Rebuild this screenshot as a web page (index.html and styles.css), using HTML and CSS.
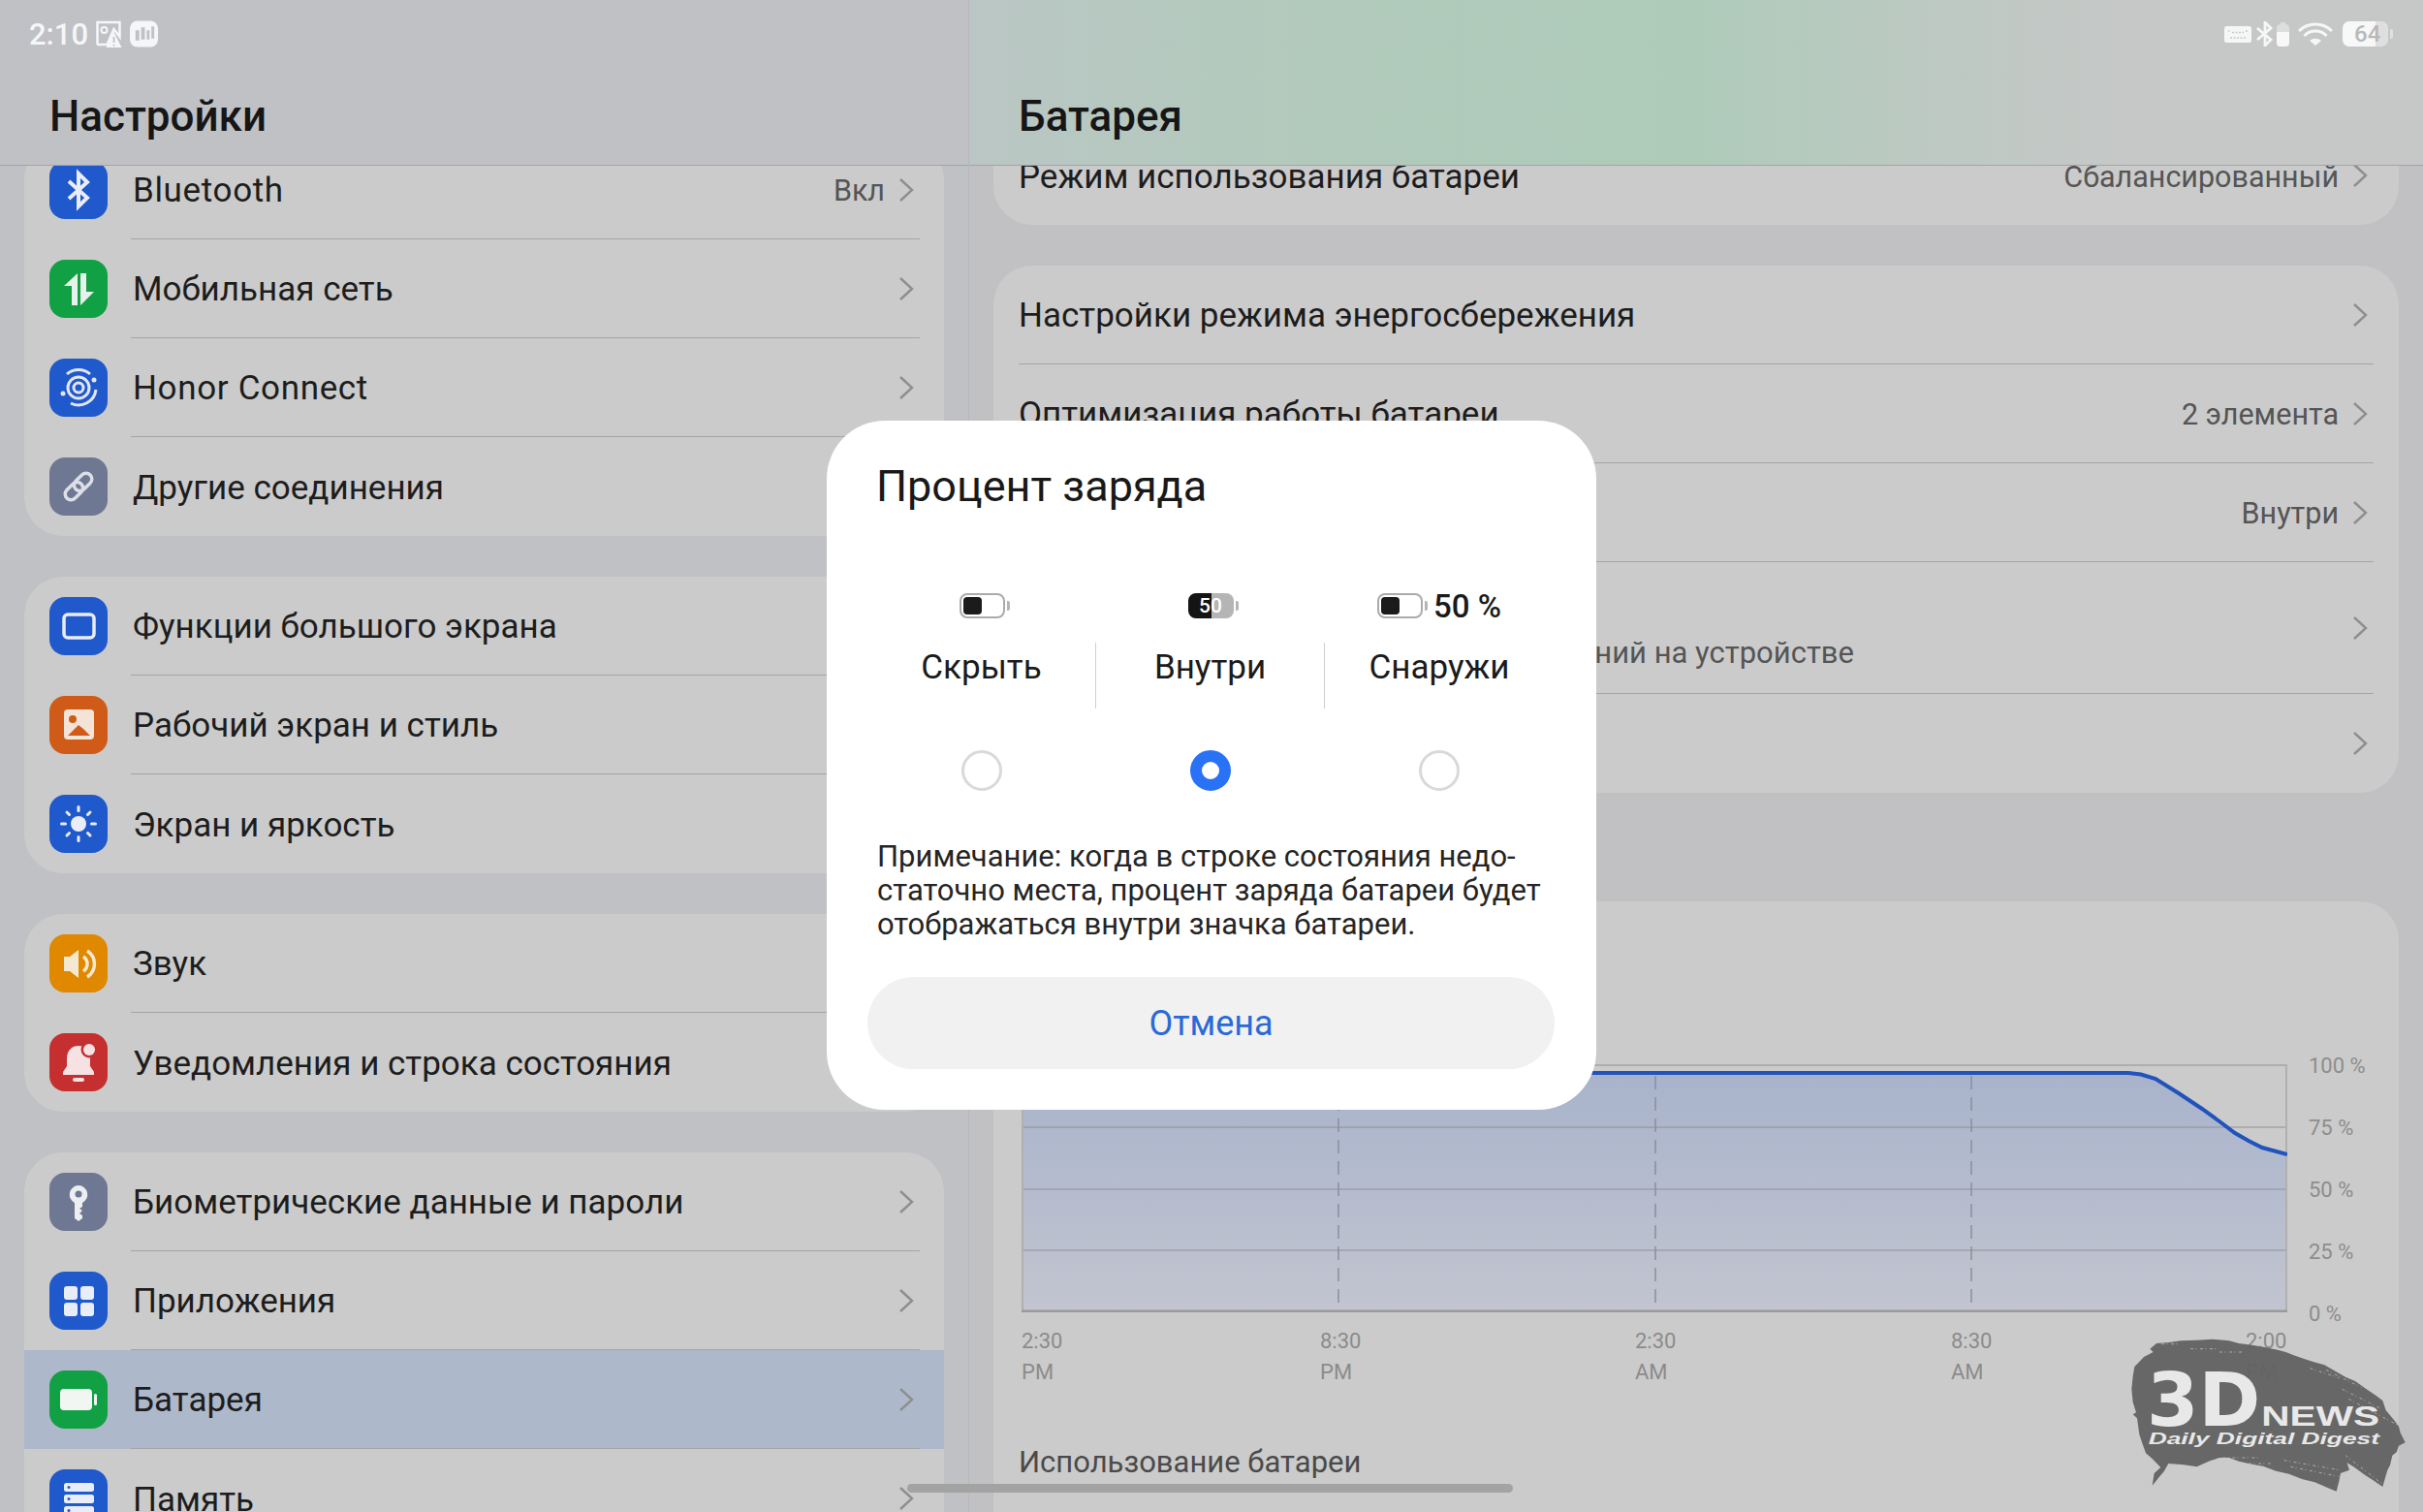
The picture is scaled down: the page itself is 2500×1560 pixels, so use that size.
FILE: index.html
```html
<!DOCTYPE html>
<html lang="ru">
<head>
    <meta charset="UTF-8">
    <title>Настройки</title>
    <link rel="stylesheet" href="styles.css">
</head>
<body>
<svg class="defs" width="0" height="0">
    <symbol id="chev" viewBox="0 0 16 26"><path d="M2 2l12 11L2 24" fill="none" stroke="#8e8e8e" stroke-width="2.4"/></symbol>
</svg>

<div class="screen">
    <!-- левая колонка -->
    <div class="pane pane-left">
        <div class="head"><h1>Настройки</h1></div>
        <div class="list list-left">
            <div class="card">
                <div class="row">
                    <svg class="ico blue" viewBox="0 0 60 60"><path d="M20 21l19 17-9 9V13l9 9-19 17" fill="none" stroke="#e8edf8" stroke-width="4"/></svg>
                    <div class="row-body"><span class="name latin">Bluetooth</span><span class="val">Вкл</span><svg class="chev"><use href="#chev"/></svg></div>
                </div>
                <div class="row">
                    <svg class="ico green" viewBox="0 0 60 60"><path d="M29 14v33h-6V27h-8zM32 47V14h6v19h8z" fill="#e8f2ec"/></svg>
                    <div class="row-body"><span class="name">Мобильная сеть</span><svg class="chev"><use href="#chev"/></svg></div>
                </div>
                <div class="row">
                    <svg class="ico blue" viewBox="0 0 60 60"><g fill="none" stroke="#e0e7f6" stroke-width="3"><circle cx="30" cy="30" r="5"/><circle cx="30" cy="30" r="11"/><path d="M18 16a18 18 0 0 1 24 0M48 32a18 18 0 0 1-26 14"/></g><circle cx="46" cy="22" r="2.5" fill="#e0e7f6"/><circle cx="14" cy="36" r="2.5" fill="#e0e7f6"/></svg>
                    <div class="row-body"><span class="name latin">Honor Connect</span><svg class="chev"><use href="#chev"/></svg></div>
                </div>
                <div class="row">
                    <svg class="ico slate" viewBox="0 0 60 60"><g fill="none" stroke="#dcdfe6" stroke-width="3.5" transform="rotate(-45 30 30)"><rect x="13" y="24" width="21" height="12" rx="6"/><rect x="26" y="24" width="21" height="12" rx="6"/></g></svg>
                    <div class="row-body"><span class="name">Другие соединения</span><svg class="chev"><use href="#chev"/></svg></div>
                </div>
            </div>

            <div class="card">
                <div class="row">
                    <svg class="ico blue" viewBox="0 0 60 60"><rect x="15" y="18" width="31" height="24" rx="4" fill="none" stroke="#e8edf8" stroke-width="3.5"/></svg>
                    <div class="row-body"><span class="name">Функции большого экрана</span><svg class="chev"><use href="#chev"/></svg></div>
                </div>
                <div class="row">
                    <svg class="ico orange" viewBox="0 0 60 60"><rect x="15" y="14" width="31" height="31" rx="4" fill="#f4e4d8"/><circle cx="24" cy="24" r="4" fill="#d05b18"/><path d="M19 41l11-11 5 4 7 7z" fill="#d05b18"/></svg>
                    <div class="row-body"><span class="name">Рабочий экран и стиль</span><svg class="chev"><use href="#chev"/></svg></div>
                </div>
                <div class="row">
                    <svg class="ico blue" viewBox="0 0 60 60"><circle cx="30" cy="30" r="8" fill="#e8edf8"/><path d="M30 12.500v4M30 43.500v4M12.500 30h4M43.500 30h4M18 18l2.500 2.500M39.500 39.500l2.500 2.500M42 18l-2.500 2.500M20.500 39.500L18 42" stroke="#e8edf8" stroke-width="3" stroke-linecap="round"/></svg>
                    <div class="row-body"><span class="name">Экран и яркость</span><svg class="chev"><use href="#chev"/></svg></div>
                </div>
            </div>

            <div class="card">
                <div class="row">
                    <svg class="ico amber" viewBox="0 0 60 60"><path d="M15 23h6l9-7v29l-9-7h-6z" fill="#f5e8d0"/><path d="M35 23a9 9 0 0 1 0 15M39 17a16 16 0 0 1 0 27" fill="none" stroke="#f5e8d0" stroke-width="3.5"/></svg>
                    <div class="row-body"><span class="name">Звук</span><svg class="chev"><use href="#chev"/></svg></div>
                </div>
                <div class="row">
                    <svg class="ico red" viewBox="0 0 60 60"><path d="M30 13c-8 0-12 6-12 13v8l-4 6v3h32v-3l-4-6v-8c0-7-4-13-12-13z" fill="#f6e2e2"/><rect x="24" y="46" width="12" height="4" rx="2" fill="#f6e2e2"/><circle cx="41" cy="17" r="8.5" fill="#c52f2f"/><circle cx="41" cy="17" r="6" fill="#f6e2e2"/></svg>
                    <div class="row-body"><span class="name">Уведомления и строка состояния</span><svg class="chev"><use href="#chev"/></svg></div>
                </div>
            </div>

            <div class="card">
                <div class="row">
                    <svg class="ico slate" viewBox="0 0 60 60"><path d="M30 13a9.500 9.500 0 0 0-4 18v16l4 3 4-3v-3l-3-2 3-3-3-2 3-2v-4a9.500 9.500 0 0 0-4-18z" fill="#eceef2"/><circle cx="30" cy="22" r="3.500" fill="#6f7893"/></svg>
                    <div class="row-body"><span class="name">Биометрические данные и пароли</span><svg class="chev"><use href="#chev"/></svg></div>
                </div>
                <div class="row">
                    <svg class="ico blue" viewBox="0 0 60 60"><g fill="#e8edf8"><rect x="15" y="15" width="14" height="14" rx="3"/><rect x="32" y="15" width="14" height="14" rx="3"/><rect x="15" y="32" width="14" height="14" rx="3"/><rect x="32" y="32" width="14" height="14" rx="3"/></g></svg>
                    <div class="row-body"><span class="name">Приложения</span><svg class="chev"><use href="#chev"/></svg></div>
                </div>
                <div class="row row-active">
                    <svg class="ico green" viewBox="0 0 60 60"><rect x="11" y="19" width="33" height="22" rx="4" fill="#f2f6f3"/><rect x="46" y="24" width="3" height="12" rx="1.500" fill="#f2f6f3"/></svg>
                    <div class="row-body"><span class="name">Батарея</span><svg class="chev"><use href="#chev"/></svg></div>
                </div>
                <div class="row">
                    <svg class="ico blue" viewBox="0 0 60 60"><g fill="#e8edf8"><rect x="15" y="14" width="31" height="9" rx="2.500"/><rect x="15" y="26" width="31" height="9" rx="2.500"/><rect x="15" y="38" width="31" height="9" rx="2.500"/></g><g fill="#2059cb"><circle cx="20" cy="18.500" r="1.500"/><circle cx="20" cy="30.500" r="1.500"/><circle cx="20" cy="42.500" r="1.500"/></g></svg>
                    <div class="row-body"><span class="name">Память</span><svg class="chev"><use href="#chev"/></svg></div>
                </div>
            </div>
        </div>
    </div>

    <!-- правая колонка -->
    <div class="pane pane-right">
        <div class="head head-right"><h1>Батарея</h1></div>
        <div class="list list-right">
            <div class="card">
                <div class="row">
                    <div class="row-body flat"><span class="name">Режим использования батареи</span><span class="val">Сбалансированный</span><svg class="chev"><use href="#chev"/></svg></div>
                </div>
            </div>
            <div class="card">
                <div class="row">
                    <div class="row-body flat"><span class="name">Настройки режима энергосбережения</span><svg class="chev"><use href="#chev"/></svg></div>
                </div>
                <div class="row">
                    <div class="row-body flat"><span class="name">Оптимизация работы батареи</span><span class="val">2 элемента</span><svg class="chev"><use href="#chev"/></svg></div>
                </div>
                <div class="row">
                    <div class="row-body flat"><span class="name"></span><span class="val">Внутри</span><svg class="chev"><use href="#chev"/></svg></div>
                </div>
                <div class="row row-tall">
                    <div class="row-body flat">
                        <div class="two-line">
                            <span class="sub">приложений на устройстве</span>
                        </div>
                        <svg class="chev"><use href="#chev"/></svg>
                    </div>
                </div>
                <div class="row">
                    <div class="row-body flat"><span class="name"></span><svg class="chev"><use href="#chev"/></svg></div>
                </div>
            </div>

            <div class="card card-chart">
                <div class="chart-wrap">
                    <svg class="plot" viewBox="0 0 1306 256">
                        <defs>
                            <linearGradient id="fillGrad" x1="0" y1="0" x2="0" y2="1">
                                <stop offset="0" stop-color="#a8b3cb"/>
                                <stop offset="1" stop-color="#c2c5d0"/>
                            </linearGradient>
                        </defs>
                        <path d="M0 256V9H1142L1155 10.500L1170 15L1194 30L1218 46L1236 59L1252 71L1266 79L1280 86L1306 93V256z" fill="url(#fillGrad)"/>
                        <path d="M1 1H1305M1 65H1305M1 129H1305M1 192H1305" stroke="#8c8c8c" stroke-opacity=".45" stroke-width="2" fill="none"/>
                        <path d="M1 0V256M1305 0V256" stroke="#b0b0b0" stroke-width="2" fill="none"/>
                        <path d="M327 12V256M654 12V256M980 12V256" stroke="#8a8f9a" stroke-width="1.500" stroke-dasharray="14 8" fill="none"/>
                        <path d="M0 255H1306" stroke="#9a9a9a" stroke-width="3"/>
                        <path d="M0 9H1142L1155 10.500L1170 15L1194 30L1218 46L1236 59L1252 71L1266 79L1280 86L1306 93" stroke="#2053bb" stroke-width="4" fill="none"/>
                    </svg>
                    <div class="y-labels">
                        <span>100 %</span><span>75 %</span><span>50 %</span><span>25 %</span><span>0 %</span>
                    </div>
                </div>
                <div class="x-labels">
                    <span>2:30<br>PM</span><span>8:30<br>PM</span><span>2:30<br>AM</span><span>8:30<br>AM</span><span>2:00<br>PM</span>
                </div>
                <div class="section-name">Использование батареи</div>
            </div>
        </div>
    </div>

    <!-- строка состояния -->
    <div class="status">
        <div class="status-side">
            <span class="clock">2:10</span>
            <svg class="st-pic" viewBox="0 0 28 28"><path d="M3 2h23v15l-6-8-7 16H4a1 1 0 0 1-1-1z" fill="none" stroke="#f5f6f7" stroke-width="2.500"/><circle cx="10" cy="10" r="3" fill="none" stroke="#f5f6f7" stroke-width="2"/><path d="M20 12l8 16H12z" fill="#f5f6f7"/><path d="M20 17v6M20 25v1.500" stroke="#bfc1c5" stroke-width="1.800"/></svg>
            <svg class="st-pic" viewBox="0 0 30 28"><rect width="30" height="28" rx="8" fill="#f5f6f7"/><path d="M6 10h4v11H6zM12 7h4v13h-4zM18 10h3v10h-3zM23 6h3v13h-3z" fill="#bfc1c5"/></svg>
        </div>
        <div class="status-side status-right">
            <svg class="st-kbd" viewBox="0 0 28 17"><rect width="28" height="17" rx="2.500" fill="#f6f6f6"/><path d="M4 5h1.500M8 6.500h12M22 5h2M6 12h16" stroke="#c6c7c7" stroke-width="1.500" stroke-dasharray="2 1.500"/></svg>
            <svg class="st-bt" viewBox="0 0 18 26"><path d="M2 7l14 12-6 6V1l6 6L2 19" fill="none" stroke="#f6f6f6" stroke-width="2.800"/></svg>
            <svg class="st-cell" viewBox="0 0 13 26"><path d="M4 3h5V1H4z" fill="#dcdddd"/><rect y="3" width="13" height="23" rx="4" fill="#dcdddd"/><path d="M0 11h13v11a4 4 0 0 1-4 4H4a4 4 0 0 1-4-4z" fill="#f8f8f8"/></svg>
            <svg class="st-wifi" viewBox="0 0 36 24"><g fill="none" stroke="#f6f6f6" stroke-width="3"><path d="M1 9a24 24 0 0 1 34 0"/><path d="M6.500 14a16 16 0 0 1 23 0"/></g><path d="M12 19a9 9 0 0 1 12 0l-6 5z" fill="#f6f6f6"/></svg>
            <div class="st-batt"><span class="st-batt-num">64</span></div>
        </div>
    </div>

    <!-- диалог -->
    <div class="dialog">
        <h2>Процент заряда</h2>
        <div class="options">
            <div class="option">
                <div class="batt-slot"><span class="batt"><i class="batt-fill"></i></span></div>
                <div class="opt-name">Скрыть</div>
                <span class="radio"></span>
            </div>
            <div class="option">
                <div class="batt-slot"><span class="batt batt-in">50</span></div>
                <div class="opt-name">Внутри</div>
                <span class="radio on"></span>
            </div>
            <div class="option">
                <div class="batt-slot"><span class="batt"><i class="batt-fill"></i></span><span class="batt-text">50 %</span></div>
                <div class="opt-name">Снаружи</div>
                <span class="radio"></span>
            </div>
        </div>
        <p class="note">Примечание: когда в строке состояния недо-<br>статочно места, процент заряда батареи будет<br>отображаться внутри значка батареи.</p>
        <div class="cancel">Отмена</div>
    </div>

    <!-- водяной знак -->
    <svg class="mark" viewBox="0 0 1050 630">
        <path d="M215 135L205 125L225 108L265 105L300 100L350 98L400 95L450 100L480 108L520 113L560 120L600 128L625 135L650 145L680 155L710 165L745 175L780 195L810 212L840 225L875 250L905 270L925 285L935 315L960 345L975 365L980 385L995 415L975 425L968 445L955 455L948 485L940 500L925 552L900 535L870 515L835 490L815 478L822 500L795 510L790 535L782 566L755 555L715 538L675 528L635 512L595 503L555 488L520 482L480 473L450 462L420 462L390 472L350 490L310 484L262 480L248 505L235 520L212 548L218 510L238 492L212 465L192 448L182 420L172 390L165 340L152 328L162 322L152 290L148 250L152 210L157 180L172 165L186 150z" fill="#636363" fill-opacity=".96"/>
        <path class="mark-brush" d="M240 110h60M330 125h90M420 135h70M700 185l90 30M750 190l110 55M800 250l120 60M820 280l150 80M430 462h110M450 480h130M620 470l170 30M640 490l150 30M810 455l110 85"/>
        <text class="mark-3d" x="195" y="362" textLength="352" lengthAdjust="spacingAndGlyphs">3D</text>
        <text class="mark-news" x="550" y="362" textLength="365" lengthAdjust="spacingAndGlyphs">NEWS</text>
        <text class="mark-sub" x="200" y="420" textLength="715" lengthAdjust="spacingAndGlyphs">Daily Digital Digest</text>
    </svg>

    <div class="home-bar"></div>
</div>
</body>
</html>
```

FILE: styles.css
```css
*{
    padding: 0;
    margin: 0;
    box-sizing: border-box;
}
html, body{
    width: 2500px;
    height: 1560px;
    overflow: hidden;
    font-family: Roboto, "Noto Sans", sans-serif;
    color: #1d1d1d;
}
.defs{
    position: absolute;
}
.screen{
    position: relative;
    width: 2500px;
    height: 1560px;
    display: flex;
    overflow: hidden;
    background-color: #c1c1c4;
}
.pane{
    position: relative;
    height: 100%;
    overflow: hidden;
}
.pane-left{
    width: 1000px;
    background-color: #c0c1c4;
    border-right: 1px solid #b7b8bb;
}
.pane-right{
    width: 1500px;
    background-color: #c1c1c3;
}

/* шапка */
.head{
    position: absolute;
    left: 0;
    top: 0;
    right: 0;
    z-index: 2;
    height: 171px;
    padding: 90px 0 0 51px;
    background-color: #bfc1c5;
    border-bottom: 1px solid #a3a4a7;
}
.head-right{
    padding-left: 51px;
    background: linear-gradient(90deg, #bac6c4 0, #b1cabb 25%, #aecbb9 50%, #bcc9c2 65%, #c6c8c7 80%);
}
.head h1{
    font-size: 44px;
    font-weight: 500;
    line-height: 60px;
    color: #161616;
}

/* списки */
.list{
    display: flex;
    flex-direction: column;
    gap: 42px;
}
.list-left{
    padding: 145px 25px 0;
}
.list-right{
    padding: 130px 25px 0;
}
.card{
    flex: none;
    overflow: hidden;
    background-color: #cbcbcb;
    border-radius: 40px;
}
.row{
    display: flex;
    align-items: center;
    height: 102px;
    padding-left: 26px;
}
.row-tall{
    height: 136px;
}
.row-active{
    background-color: #aeb8cb;
}
.ico{
    flex: none;
    width: 60px;
    height: 60px;
    margin-right: 24px;
    border-radius: 16px;
}
.blue{ background-color: #2059cb; }
.green{ background-color: #12a044; }
.slate{ background-color: #6f7893; }
.orange{ background-color: #d05b18; }
.amber{ background-color: #df8800; }
.red{ background-color: #c52f2f; }

.row-body{
    flex: 1;
    display: flex;
    align-items: center;
    height: 100%;
    margin-right: 25px;
    padding: 0 6px 0 2px;
    border-bottom: 1px solid #a5a5a5;
}
.row-body.flat{
    padding-left: 0;
    margin-right: 26px;
}
.row:last-child .row-body{
    border-bottom: none;
}
.name{
    flex: 1;
    padding-top: 3px;
    font-size: 35px;
    line-height: 46px;
    white-space: nowrap;
}
.latin{
    letter-spacing: .65px;
}
.val{
    margin-right: 14px;
    padding-top: 2px;
    font-size: 30.5px;
    color: #555;
}
.chev{
    flex: none;
    width: 16px;
    height: 26px;
}
.two-line{
    flex: 1;
    padding-top: 52px;
}
.sub{
    display: block;
    width: 862px;
    font-size: 31px;
    line-height: 38px;
    text-align: right;
    white-space: nowrap;
    color: #555;
}

/* график */
.card-chart{
    height: 700px;
    margin-top: 70px;
    padding: 168px 0 0 29px;
}
.chart-wrap{
    display: flex;
    height: 256px;
}
.plot{
    flex: none;
    width: 1306px;
    height: 256px;
}
.y-labels{
    display: flex;
    flex-direction: column;
    justify-content: space-between;
    height: 282px;
    margin: -11px 0 0 22px;
    font-size: 22px;
    line-height: 26px;
    white-space: nowrap;
    color: #8d8d8d;
}
.x-labels{
    display: grid;
    grid-template-columns: 308px 325px 326px 304px auto;
    margin-top: 14px;
    font-size: 22px;
    line-height: 32px;
    color: #8b8b8b;
}
.section-name{
    margin: 59px 0 0 -3px;
    font-size: 31px;
    line-height: 36px;
    color: #4a4a4a;
}

/* строка состояния */
.status{
    position: absolute;
    left: 0;
    top: 0;
    right: 0;
    z-index: 3;
    display: flex;
    justify-content: space-between;
    align-items: center;
    height: 70px;
    padding: 0 36px 0 30px;
}
.status-side{
    display: flex;
    align-items: center;
    gap: 6px;
}
.status-right{
    gap: 4px;
}
.clock{
    font-size: 31px;
    font-weight: 500;
    color: #f5f6f7;
}
.st-pic{
    width: 29px;
    height: 28px;
}
.st-pic + .st-pic{
    margin-left: 2px;
}
.st-kbd{
    width: 28px;
    height: 17px;
}
.st-bt{
    width: 18px;
    height: 26px;
}
.st-cell{
    width: 13px;
    height: 26px;
}
.st-wifi{
    width: 36px;
    height: 24px;
    margin: 0 6px 0 5px;
}
.st-batt{
    position: relative;
    width: 47px;
    height: 26px;
    padding-left: 12px;
    font-size: 24px;
    line-height: 26px;
    font-weight: 500;
    color: #b9b9b9;
    border-radius: 7px;
    background: linear-gradient(90deg, #f8f8f8 72%, #dfdfdf 72%);
}
.st-batt:after{
    content: "";
    position: absolute;
    right: -5px;
    top: 8px;
    width: 3px;
    height: 10px;
    border-radius: 0 2px 2px 0;
    background-color: #dfdfdf;
}

/* диалог */
.dialog{
    position: absolute;
    left: 853px;
    top: 434px;
    z-index: 4;
    width: 794px;
    height: 711px;
    padding: 38px 43px 0 42px;
    background-color: #fff;
    border-radius: 60px;
}
.dialog h2{
    padding-left: 9px;
    font-size: 45px;
    font-weight: 400;
    line-height: 60px;
    color: #191919;
}
.options{
    display: grid;
    grid-template-columns: repeat(3, 236px);
    margin-top: 72px;
}
.option{
    display: flex;
    flex-direction: column;
    align-items: center;
}
.batt-slot{
    display: flex;
    align-items: center;
    gap: 11px;
    height: 42px;
}
.batt{
    position: relative;
    display: block;
    width: 47px;
    height: 26px;
    padding: 2px;
    background-color: #fff;
    border: 2px solid #ababab;
    border-radius: 8px;
}
.batt:after{
    content: "";
    position: absolute;
    right: -7px;
    top: 6px;
    width: 3px;
    height: 10px;
    border-radius: 0 2px 2px 0;
    background-color: #b5b5b5;
}
.batt-fill{
    display: block;
    width: 19px;
    height: 100%;
    background-color: #1b1b1b;
    border-radius: 4px;
}
.batt-in{
    padding: 0;
    border: none;
    font-size: 21px;
    font-weight: 500;
    line-height: 26px;
    text-align: center;
    color: #fff;
    background: linear-gradient(90deg, #141414 51%, #b5b5b5 51%);
}
.batt-in:after{
    top: 8px;
    right: -5px;
}
.batt-text{
    font-size: 33px;
    font-weight: 500;
    color: #1b1b1b;
}
.opt-name{
    align-self: stretch;
    height: 68px;
    margin-top: 17px;
    font-size: 35px;
    line-height: 52px;
    text-align: center;
    color: #1b1b1b;
    border-right: 1px solid #cfcfcf;
}
.option:last-child .opt-name{
    border-right: none;
}
.radio{
    width: 42px;
    height: 42px;
    margin-top: 43px;
    border: 3px solid #d9d9d9;
    border-radius: 50%;
}
.radio.on{
    border: 12px solid #2a72f5;
}
.note{
    margin-top: 50px;
    padding-left: 10px;
    font-size: 31px;
    line-height: 35px;
    color: #252525;
    white-space: nowrap;
}
.cancel{
    height: 95px;
    margin-top: 37px;
    font-size: 36px;
    line-height: 97px;
    text-align: center;
    color: #2a6ad8;
    background-color: #f1f1f1;
    border-radius: 48px;
}

/* водяной знак */
.mark{
    position: absolute;
    left: 2150px;
    top: 1350px;
    z-index: 5;
    width: 350px;
    height: 210px;
}
.mark-brush{
    fill: none;
    stroke: #cbcbcb;
    stroke-width: 2;
    stroke-dasharray: 9 7 3 11;
}
.mark-3d{
    font-family: "DejaVu Sans", sans-serif;
    font-size: 228px;
    font-weight: 700;
    fill: #e8e8e8;
}
.mark-news{
    font-family: "Liberation Sans", sans-serif;
    font-size: 87px;
    font-weight: 700;
    fill: #e8e8e8;
}
.mark-sub{
    font-family: "Liberation Sans", sans-serif;
    font-size: 51px;
    font-weight: 700;
    font-style: italic;
    fill: #e8e8e8;
}
.home-bar{
    position: absolute;
    left: 936px;
    top: 1531px;
    z-index: 6;
    width: 625px;
    height: 9px;
    background-color: #a3a3a3;
    border-radius: 5px;
}
```
